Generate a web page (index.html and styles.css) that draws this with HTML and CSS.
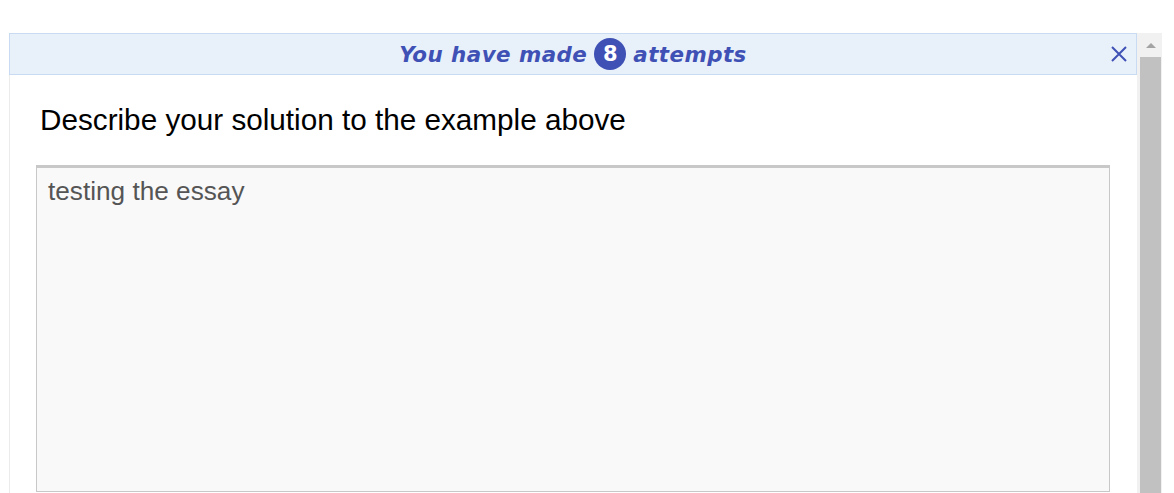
FILE: index.html
```html
<!DOCTYPE html>
<html lang="en">
<head>
<meta charset="utf-8">
<title>Essay</title>
<link rel="stylesheet" href="styles.css">
</head>
<body>
<div class="page">
  <div class="frame">
    <div class="panel">
      <div class="banner">
        <span class="banner-text">You have made</span>
        <span class="count">8</span>
        <span class="banner-text">attempts</span>
        <button class="close" aria-label="Close">
          <svg width="16" height="16" viewBox="0 0 16 16"><path d="M1 1L15 15M15 1L1 15" stroke="#3f51b5" stroke-width="2" fill="none"/></svg>
        </button>
      </div>
      <div class="content">
        <h2 class="question">Describe your solution to the example above</h2>
        <textarea class="answer" readonly>testing the essay</textarea>
      </div>
    </div>
    <div class="scrollbar">
      <div class="scroll-up"></div>
      <div class="thumb"></div>
    </div>
  </div>
</div>
</body>
</html>
```

FILE: styles.css
```css
html, body {
  margin: 0;
  padding: 0;
  background: #fff;
  height: 100%;
  overflow: hidden;
}
.page {
  padding: 33px 0 0 9px;
  height: 100%;
  box-sizing: border-box;
}
.frame {
  display: flex;
  height: 100%;
  width: 1153px;
}
.panel {
  width: 1128px;
  border-left: 1px solid #ebebeb;
  box-sizing: border-box;
  display: flex;
  flex-direction: column;
}
.banner {
  position: relative;
  height: 42px;
  box-sizing: border-box;
  margin-left: -1px;
  border: 1px solid #c8dbf3;
  background: #e8f0fa;
  display: flex;
  align-items: center;
  justify-content: center;
  gap: 7px;
  color: #3f51b5;
  font-family: "DejaVu Sans", "Open Sans", sans-serif;
  font-style: italic;
  font-weight: 700;
  font-size: 21.4px;
}
.banner-text {
  letter-spacing: 0.45px;
}
.count {
  width: 32px;
  height: 32px;
  border-radius: 50%;
  background: #3f51b5;
  color: #fff;
  font-style: normal;
  font-size: 21px;
  display: flex;
  align-items: center;
  justify-content: center;
  line-height: 1;
}
.close {
  position: absolute;
  right: 9px;
  top: 12px;
  width: 16px;
  height: 16px;
  padding: 0;
  border: 0;
  background: none;
  display: block;
}
.close svg { display: block; }
.content {
  padding: 0 27px 0 26px;
  flex: 1;
  display: flex;
  flex-direction: column;
}
.question {
  margin: 28px 0 0 4px;
  font-family: "Liberation Sans", Arial, sans-serif;
  font-weight: 400;
  font-size: 29.7px;
  line-height: 34px;
  color: #000;
}
.answer {
  margin-top: 28px;
  width: 1074px;
  height: 327px;
  box-sizing: border-box;
  border: 1px solid #c8c8c8;
  border-top: 3px solid #c8c8c8;
  background: #f9f9f9;
  padding: 8px 11px;
  font-family: "Liberation Sans", Arial, sans-serif;
  font-size: 26.2px;
  line-height: 30px;
  color: #555;
  resize: none;
  outline: none;
}
.scrollbar {
  width: 25px;
  background: #f1f1f1;
  display: flex;
  flex-direction: column;
  align-items: flex-end;
  padding-right: 1px;
}
.scroll-up {
  width: 21px;
  height: 24px;
  display: flex;
  align-items: center;
  justify-content: center;
}
.scroll-up::before {
  content: "";
  border-left: 5px solid transparent;
  border-right: 5px solid transparent;
  border-bottom: 5px solid #a3a3a3;
}
.thumb {
  width: 21px;
  flex: 1;
  background: #c1c1c1;
}
```
